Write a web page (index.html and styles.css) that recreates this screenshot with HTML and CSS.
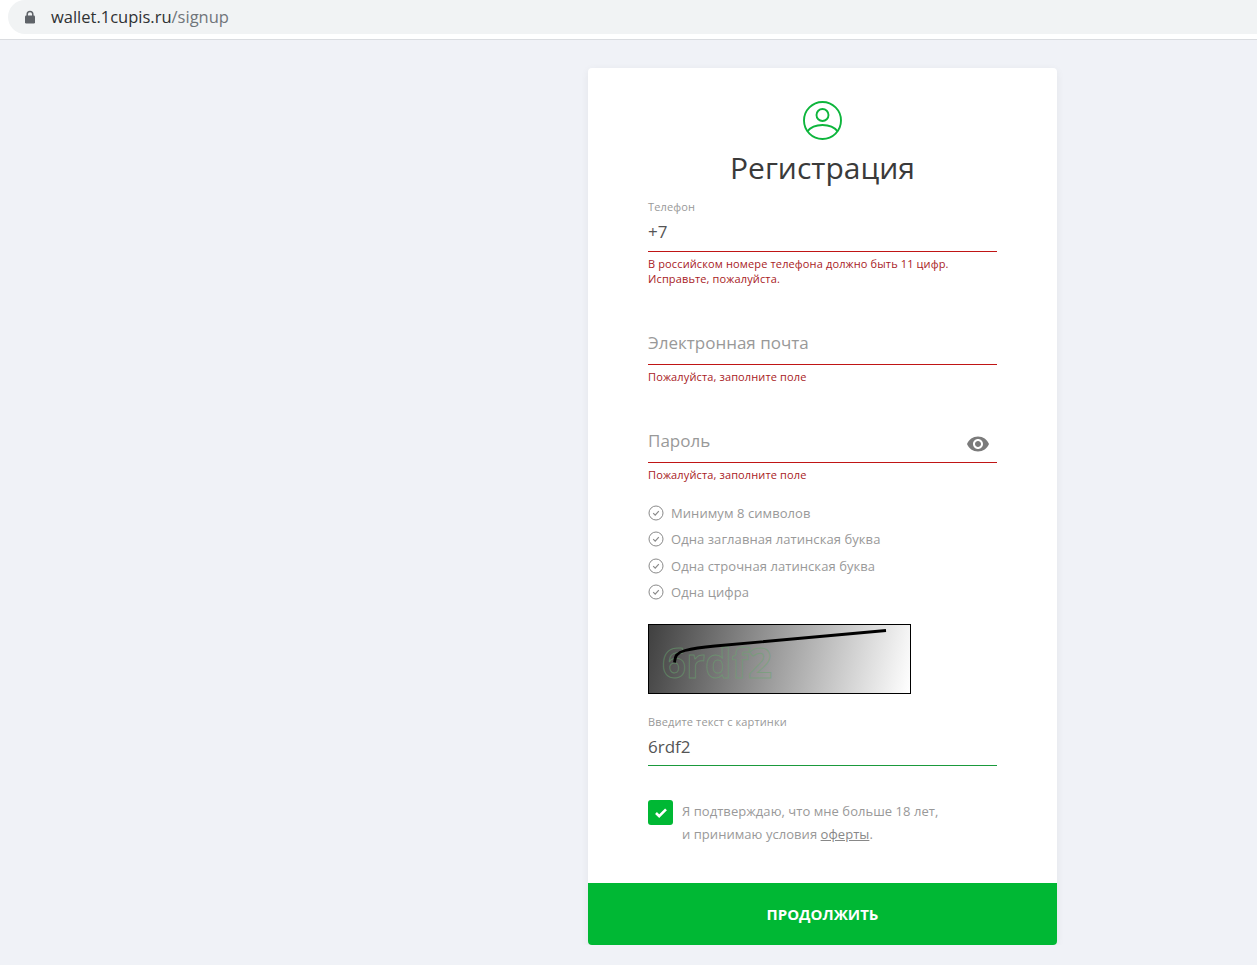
FILE: index.html
```html
<!DOCTYPE html>
<html lang="ru">
<head>
    <meta charset="UTF-8">
    <meta name="viewport" content="width=device-width, initial-scale=1.0">
    <title>Регистрация</title>
    <link rel="stylesheet" href="styles.css">
</head>
<body>
    <div class="browser-bar">
        <div class="address">
            <svg class="lock" width="12" height="14" viewBox="0 0 12 14">
                <path d="M3.2 6V4.2a2.8 2.8 0 0 1 5.6 0V6" fill="none" stroke="#5f6368" stroke-width="1.5"/>
                <rect x="1" y="5.5" width="10" height="8" rx="1.2" fill="#5f6368"/>
            </svg>
            <span class="host">wallet.1cupis.ru</span><span class="path">/signup</span>
        </div>
    </div>

    <div class="page">
        <form class="card">
            <div class="card-body">
                <svg class="user-icon" width="40" height="40" viewBox="0 0 40 40" fill="none" stroke="#0db53c" stroke-width="1.900">
                    <circle cx="19.500" cy="19.500" r="18.500"/>
                    <circle cx="19.500" cy="14" r="6"/>
                    <path d="M4.200 30.500c3.500-4.500 9-6.500 15.300-6.500s11.800 2 15.300 6.500"/>
                </svg>
                <h1>Регистрация</h1>

                <div class="field first">
                    <label class="field-label" for="phone">Телефон</label>
                    <input class="field-input filled" type="text" id="phone" value="+7">
                    <div class="error">В российском номере телефона должно быть 11 цифр.<br>Исправьте, пожалуйста.</div>
                </div>

                <div class="field">
                    <label class="field-label" for="email"></label>
                    <input class="field-input" type="text" id="email" placeholder="Электронная почта">
                    <div class="error">Пожалуйста, заполните поле</div>
                </div>

                <div class="field">
                    <label class="field-label" for="password"></label>
                    <div class="password-wrap">
                        <input class="field-input" type="text" id="password" placeholder="Пароль">
                        <svg class="eye" width="24" height="24" viewBox="0 0 24 24">
                            <path fill="#7b7b7b" d="M12 4.500C7 4.500 2.730 7.610 1 12c1.730 4.390 6 7.500 11 7.500s9.270-3.110 11-7.500c-1.730-4.390-6-7.500-11-7.500zM12 17c-2.760 0-5-2.240-5-5s2.240-5 5-5 5 2.240 5 5-2.240 5-5 5zm0-8c-1.660 0-3 1.340-3 3s1.340 3 3 3 3-1.340 3-3-1.340-3-3-3z"/>
                        </svg>
                    </div>
                    <div class="error">Пожалуйста, заполните поле</div>
                </div>

                <ul class="rules">
                    <li><svg width="16" height="16" viewBox="0 0 16 16" fill="none" stroke="#8a8a8a"><circle cx="8" cy="8" r="7"/><path d="M5.200 8.200l2 2 3.600-4" stroke-width="1.200"/></svg>Минимум 8 символов</li>
                    <li><svg width="16" height="16" viewBox="0 0 16 16" fill="none" stroke="#8a8a8a"><circle cx="8" cy="8" r="7"/><path d="M5.200 8.200l2 2 3.600-4" stroke-width="1.200"/></svg>Одна заглавная латинская буква</li>
                    <li><svg width="16" height="16" viewBox="0 0 16 16" fill="none" stroke="#8a8a8a"><circle cx="8" cy="8" r="7"/><path d="M5.200 8.200l2 2 3.600-4" stroke-width="1.200"/></svg>Одна строчная латинская буква</li>
                    <li><svg width="16" height="16" viewBox="0 0 16 16" fill="none" stroke="#8a8a8a"><circle cx="8" cy="8" r="7"/><path d="M5.200 8.200l2 2 3.600-4" stroke-width="1.200"/></svg>Одна цифра</li>
                </ul>

                <div class="captcha">
                    <svg width="261" height="68" viewBox="0 0 261 68">
                        <text x="13" y="53" class="captcha-text">6rdf2</text>
                        <path d="M25.500 37.500c.5-4 .8-5.800 2.200-7.500 2-2.200 5-3.700 8.300-4.500 9-2.200 20-3.500 30-4.500L237 5.500" fill="none" stroke="#000" stroke-width="2.800"/>
                    </svg>
                </div>

                <div class="field captcha-field">
                    <label class="field-label" for="code">Введите текст с картинки</label>
                    <input class="field-input filled valid" type="text" id="code" value="6rdf2">
                </div>

                <div class="agree">
                    <span class="checkbox">
                        <svg width="14" height="12" viewBox="0 0 14 12"><path d="M2 6l3.200 3.200L12 2.400" fill="none" stroke="#fff" stroke-width="2.600"/></svg>
                    </span>
                    <p>Я подтверждаю, что мне больше 18 лет,<br>и принимаю условия <a href="#">оферты</a>.</p>
                </div>
            </div>
            <button type="button" class="submit">ПРОДОЛЖИТЬ</button>
        </form>
    </div>
</body>
</html>
```

FILE: styles.css
```css
* {
    box-sizing: border-box;
}

body {
    margin: 0;
    padding: 0;
    background-color: #f0f2f7;
    font-family: "Open Sans", Arial, sans-serif;
    color: #333;
}

.browser-bar {
    height: 40px;
    padding: 0 0 5px 8px;
    background-color: #fff;
    border-bottom: 1px solid #dadce0;
}

.address {
    display: flex;
    align-items: center;
    height: 34px;
    padding: 0 0 1px 16px;
    background-color: #f1f3f4;
    border-radius: 17px 0 0 17px;
    font-size: 16.5px;
}

.lock {
    margin-right: 15px;
}

.host {
    color: #2f3133;
}

.path {
    color: #70757a;
}

.page {
    display: flex;
    padding: 28px 200px 0 588px;
}

.card {
    width: 469px;
    background-color: #fff;
    border-radius: 4px;
    overflow: hidden;
    box-shadow: 0 2px 8px rgba(0, 0, 0, 0.06);
}

.card-body {
    padding: 33px 60px 37px;
}

.user-icon {
    display: block;
    margin: 0 auto;
}

h1 {
    margin: 8px 0 0;
    font-size: 30px;
    font-weight: 400;
    line-height: 38px;
    text-align: center;
    color: #3a3a3a;
}

.field {
    margin-top: 26px;
}

.field.first {
    margin-top: 12px;
}

.field-label {
    display: block;
    height: 16px;
    font-size: 11px;
    line-height: 16px;
    letter-spacing: 0.12px;
    color: #999;
}

.field-input {
    display: block;
    width: 100%;
    height: 37px;
    padding: 0 0 7px;
    border: none;
    border-bottom: 1px solid #c01515;
    outline: none;
    background: transparent;
    font-family: inherit;
    font-size: 17px;
    color: #555;
}

.field-input.filled {
    padding-bottom: 3px;
}

.field-input::placeholder {
    color: #999;
    opacity: 1;
}

.field-input.valid {
    height: 36px;
    padding-bottom: 2px;
    border-bottom-color: #1a9a3c;
}

.password-wrap {
    position: relative;
}

.eye {
    position: absolute;
    right: 7px;
    top: 6px;
}

.error {
    margin-top: 4px;
    font-size: 11px;
    line-height: 15px;
    letter-spacing: 0.13px;
    color: #a81a1e;
}

.rules {
    margin: 18px 0 0;
    padding: 0;
    list-style: none;
}

.rules li {
    display: flex;
    align-items: center;
    gap: 7px;
    height: 26.33px;
    font-size: 13px;
    letter-spacing: 0.07px;
    color: #999;
}

.captcha {
    width: 263px;
    height: 70px;
    margin-top: 19px;
    border: 1px solid #000;
    background: linear-gradient(103deg, #404040 0%, #fff 100%);
}

.captcha svg {
    display: block;
}

.captcha-text {
    font-size: 42px;
    font-weight: 700;
    fill: none;
    stroke: #69a56f;
    stroke-opacity: 0.55;
    stroke-width: 1;
}

.captcha-field {
    margin-top: 20px;
}

.agree {
    display: flex;
    align-items: flex-start;
    gap: 9px;
    margin-top: 34px;
}

.checkbox {
    display: flex;
    align-items: center;
    justify-content: center;
    flex: none;
    width: 25px;
    height: 25px;
    background-color: #00b834;
    border-radius: 3px;
}

.agree p {
    margin: 0;
    font-size: 13px;
    line-height: 23px;
    letter-spacing: 0.05px;
    color: #999;
}

.agree a {
    color: #888;
}

.submit {
    display: block;
    width: 100%;
    height: 62px;
    border: none;
    background-color: #00b834;
    color: #fff;
    font-family: inherit;
    font-size: 15px;
    font-weight: 700;
    cursor: pointer;
}
```
